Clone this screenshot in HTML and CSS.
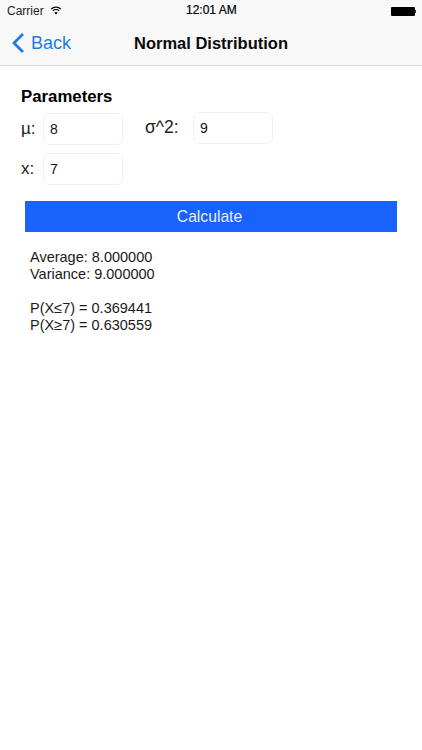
FILE: index.html
```html
<!DOCTYPE html>
<html lang="en">
<head>
  <meta charset="UTF-8">
  <meta name="viewport" content="width=device-width, initial-scale=1.0">
  <link rel="stylesheet" href="styles.css">
</head>
<body>
  <header class="top-bar">
    <div class="status-bar">
      <div class="status-left">
        <span class="carrier">Carrier</span>
        <svg class="wifi" width="12" height="9" viewBox="0 0 14 11">
          <path d="M1 3.800C4.400.6 9.600.6 13 3.800" fill="none" stroke="#000" stroke-width="1.500"/>
          <path d="M3.100 6C5.300 4 8.700 4 10.900 6" fill="none" stroke="#000" stroke-width="1.500"/>
          <path d="M7 10.500 4.900 8C6.100 7 7.900 7 9.100 8Z" fill="#000"/>
        </svg>
      </div>
      <span class="clock">12:01 AM</span>
      <div class="battery">
        <div class="battery-body"></div>
        <div class="battery-tip"></div>
      </div>
    </div>
    <nav class="nav-bar">
      <div class="back">
        <svg width="14" height="22" viewBox="0 0 14 22">
          <path d="M12 2 3 11l9 9" fill="none" stroke="#1c7ce8" stroke-width="2.800"/>
        </svg>
        <span>Back</span>
      </div>
      <div class="nav-title">Normal Distribution</div>
    </nav>
  </header>

  <main class="content">
    <h2 class="section-title">Parameters</h2>
    <div class="param-row first-row">
      <div class="param">
        <span class="param-label mu-label">µ:</span>
        <div class="param-input">8</div>
      </div>
      <div class="param sigma-param">
        <span class="param-label sigma-label">σ^2:</span>
        <div class="param-input">9</div>
      </div>
    </div>
    <div class="param-row">
      <div class="param">
        <span class="param-label mu-label">x:</span>
        <div class="param-input">7</div>
      </div>
    </div>

    <button class="calculate">Calculate</button>

    <div class="results">
      <div>Average: 8.000000</div>
      <div>Variance: 9.000000</div>
      <div class="blank-line"></div>
      <div>P(X≤7) = 0.369441</div>
      <div>P(X≥7) = 0.630559</div>
    </div>
  </main>
</body>
</html>
```

FILE: styles.css
```css
* {
  margin: 0;
  padding: 0;
  box-sizing: border-box;
}

html, body {
  height: 100%;
  overflow: hidden;
  background: #ffffff;
  color: #000000;
  font-family: "Liberation Sans", Arial, sans-serif;
}

.top-bar {
  height: 66px;
  background: #f8f8f8;
  border-bottom: 1px solid #d9d9d9;
}

.status-bar {
  height: 22px;
  padding: 0 6px 0 7px;
  display: flex;
  align-items: center;
  justify-content: space-between;
  font-size: 12px;
  position: relative;
}

.status-left {
  display: flex;
  align-items: center;
  gap: 6px;
  color: #222222;
}

.wifi {
  margin-top: -2px;
}

.clock {
  position: absolute;
  left: 186px;
  top: 3px;
  font-size: 12px;
  -webkit-text-stroke: 0.2px #000000;
}

.battery {
  display: flex;
  align-items: center;
}

.battery-body {
  width: 24px;
  height: 9px;
  background: #000000;
  border-radius: 1px;
}

.battery-tip {
  width: 1.500px;
  height: 3px;
  background: #333333;
}

.nav-bar {
  height: 43px;
  position: relative;
  display: flex;
  align-items: center;
  justify-content: center;
}

.back {
  position: absolute;
  left: 11px;
  top: 10px;
  display: flex;
  align-items: center;
  gap: 6px;
  color: #1c7ce8;
  font-size: 18px;
}

.nav-title {
  font-size: 16.500px;
  font-weight: bold;
  color: #0a0a0a;
}

.content {
  padding: 21px 25px 0 25px;
}

.section-title {
  margin-left: -4px;
  font-size: 16.800px;
  font-weight: bold;
  line-height: 19px;
  color: #000000;
}

.param-row {
  display: flex;
  margin-left: -4px;
  margin-top: 8px;
}

.first-row {
  margin-top: 7px;
}

.param {
  display: flex;
  align-items: center;
}

.sigma-param {
  margin-left: 22px;
  margin-top: -2px;
}

.param-label {
  font-size: 17px;
  color: #222222;
}

.mu-label {
  width: 22px;
}

.sigma-label {
  width: 48px;
  margin-top: -1px;
  font-size: 17.500px;
}

.param-input {
  width: 80px;
  height: 32px;
  padding-left: 6px;
  font-size: 14px;
  line-height: 30px;
  background: #ffffff;
  border: 1px solid #f0f0f0;
  border-radius: 6px;
  color: #111111;
}

.calculate {
  display: block;
  width: 372px;
  height: 31px;
  margin-top: 16px;
  padding-right: 3px;
  background: #1763fb;
  border: none;
  color: #e8f0ff;
  font-family: "Liberation Sans", Arial, sans-serif;
  font-size: 15.700px;
}

.results {
  margin: 17px 0 0 5px;
  font-size: 14.500px;
  line-height: 17px;
  color: #1a1a1a;
}

.blank-line {
  height: 17px;
}
```
